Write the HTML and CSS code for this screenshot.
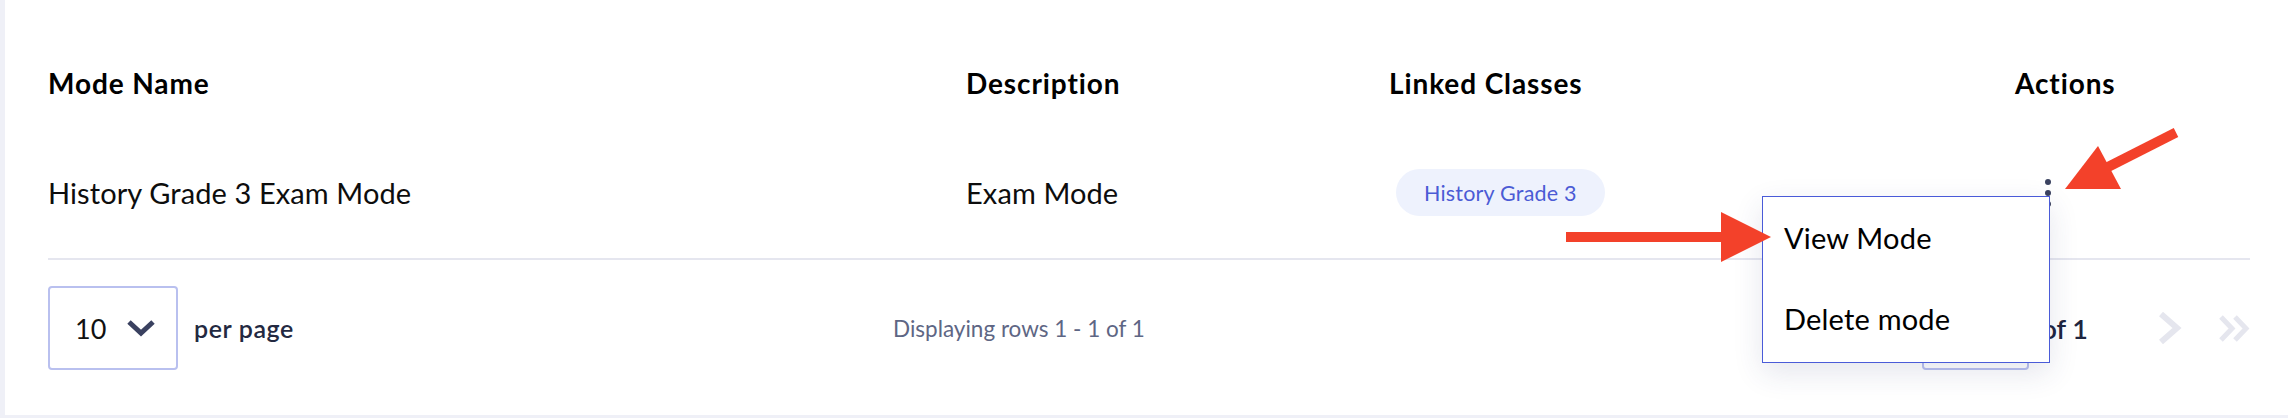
FILE: index.html
```html
<!DOCTYPE html>
<html>
<head>
<meta charset="utf-8">
<link rel="stylesheet" href="styles.css">
</head>
<body>
<div class="card">
  <div class="table">
    <div class="row head">
      <div class="cell">Mode Name</div>
      <div class="cell">Description</div>
      <div class="cell">Linked Classes</div>
      <div class="cell">Actions</div>
    </div>
    <div class="row body">
      <div class="cell">History Grade 3 Exam Mode</div>
      <div class="cell">Exam Mode</div>
      <div class="cell"><span class="pill">History Grade 3</span></div>
      <div class="cell actions">
        <div class="kebab">
          <span class="dot"></span><span class="dot"></span><span class="dot"></span>
          <div class="menu">
            <div class="menu-item">View Mode</div>
            <div class="menu-item">Delete mode</div>
          </div>
        </div>
      </div>
    </div>
  </div>
  <div class="footer">
    <div class="per-page">
      <div class="select">
        <span class="select-val">10</span>
        <svg class="select-chev" width="30" height="18" viewBox="0 0 30 18"><polyline points="3,3 15,14 27,3" fill="none" stroke="#3a4160" stroke-width="5"/></svg>
      </div>
      <span class="per-label">per page</span>
    </div>
    <div class="count">Displaying rows 1 - 1 of 1</div>
    <div class="pager">
      <div class="page-box">1</div>
      <span class="of">of 1</span>
      <svg class="next" width="24" height="32" viewBox="0 0 24 32"><polyline points="3,2 19,16 3,30" fill="none" stroke="#e5e6ee" stroke-width="6"/></svg>
      <svg class="last" width="31" height="27" viewBox="0 0 31 27"><polyline points="2,2 13,13.5 2,25" fill="none" stroke="#e5e6ee" stroke-width="5"/><polyline points="16,2 27,13.5 16,25" fill="none" stroke="#e5e6ee" stroke-width="5"/></svg>
    </div>
  </div>
</div>
<svg class="annot" width="2288" height="418" viewBox="0 0 2288 418">
  <rect x="1566" y="232" width="157" height="10" fill="#f3412a"/>
  <polygon points="1721,212 1771,237 1721,262" fill="#f3412a"/>
  <line x1="2176" y1="132.5" x2="2106" y2="168" stroke="#f3412a" stroke-width="10"/>
  <polygon points="2065,189 2098,146 2121,189" fill="#f3412a"/>
</svg>
</body>
</html>
```

FILE: styles.css
```css
html, body {
  margin: 0;
  padding: 0;
}
body {
  width: 2288px;
  height: 418px;
  background: #eff0f7;
  font-family: "Lato", "Noto Sans", sans-serif;
  color: #0d0d0d;
  position: relative;
  overflow: hidden;
}
.card {
  margin-left: 5px;
  height: 415px;
  background: #ffffff;
  box-sizing: border-box;
  padding: 39px 38px 0 43px;
}
.row {
  display: grid;
  grid-template-columns: 918px 423px 626px 1fr;
  align-items: center;
}
.row.head {
  height: 88px;
  font-weight: 700;
  font-size: 28px;
  letter-spacing: 0.9px;
  color: #000;
}
.row.body {
  height: 131px;
  border-bottom: 2px solid #e5e6ef;
  font-size: 29px;
  letter-spacing: 0.1px;
}
.pill {
  display: inline-flex;
  align-items: center;
  height: 47px;
  padding: 0 28px;
  margin-left: 7px;
  border-radius: 24px;
  background: #eef2fd;
  color: #4b5bd5;
  font-size: 21.5px;
  letter-spacing: 0.2px;
}
.actions {
  display: flex;
}
.kebab {
  position: relative;
  margin-left: 30px;
  display: flex;
  flex-direction: column;
  gap: 5px;
  width: 6px;
}
.dot {
  width: 6px;
  height: 6px;
  border-radius: 50%;
  background: #3b4260;
}
.menu {
  position: absolute;
  top: 17px;
  right: 1px;
  width: 288px;
  height: 167px;
  box-sizing: border-box;
  border: 1px solid #4a5bd8;
  background: #fff;
  box-shadow: 0 10px 28px rgba(40, 50, 110, 0.12);
  display: flex;
  flex-direction: column;
  padding-bottom: 2px;
  z-index: 5;
}
.menu-item {
  flex: 1;
  display: flex;
  align-items: center;
  padding-left: 21px;
  font-size: 29px;
  letter-spacing: 0.2px;
  color: #000;
}
.footer {
  display: grid;
  grid-template-columns: 845px 1fr auto;
  align-items: center;
  padding: 26px 0 44px;
}
.per-page {
  display: flex;
  align-items: center;
}
.select {
  width: 130px;
  height: 84px;
  box-sizing: border-box;
  border: 2px solid #b9c0ef;
  border-radius: 4px;
  display: flex;
  align-items: center;
  padding-left: 25px;
  gap: 20px;
}
.select-val {
  font-size: 27px;
  color: #111;
}
.per-label {
  margin-left: 16px;
  font-size: 25px;
  font-weight: 600;
  color: #232941;
  letter-spacing: 0.6px;
}
.count {
  font-size: 22.5px;
  color: #5e6684;
  letter-spacing: 0px;
}
.pager {
  display: flex;
  align-items: center;
}
.page-box {
  width: 107px;
  height: 84px;
  box-sizing: border-box;
  border: 2px solid #b9c0ef;
  border-radius: 4px;
  display: flex;
  align-items: center;
  justify-content: center;
  font-size: 26px;
  color: #1e2540;
}
.of {
  margin-left: 12px;
  font-size: 27px;
  font-weight: 600;
  color: #1e2540;
}
.next {
  margin-left: 70px;
}
.last {
  margin-left: 37px;
}
.annot {
  position: absolute;
  top: 0;
  left: 0;
  pointer-events: none;
  z-index: 10;
}
```
